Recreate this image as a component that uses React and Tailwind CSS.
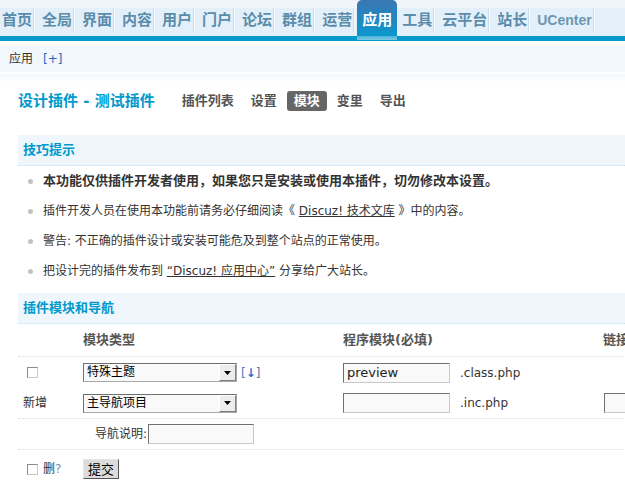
import React from "react";

const tabs = ["首页", "全局", "界面", "内容", "用户", "门户", "论坛", "群组", "运营", "应用", "工具", "云平台", "站长", "UCenter"];
const subNav = ["插件列表", "设置", "模块", "变里", "导出"];

const inputClass =
  "h-[20px] border border-t-[#707070] border-l-[#707070] border-r-[#c8c8c8] border-b-[#c8c8c8] bg-[#f9f9f9] pl-[3px] text-[13px] text-[#222] outline-none";

const FakeSelect = ({ value }) => (
  <div className="flex h-[19px] w-[154px] border border-t-[#707070] border-l-[#707070] border-r-[#a8a8a8] border-b-[#a8a8a8] bg-[#f9f9f9]">
    <span className="flex-1 pl-[3px] text-[12px] leading-[17px] text-black">{value}</span>
    <span className="flex w-[17px] items-center justify-center border border-t-white border-l-white border-r-[#808080] border-b-[#808080] bg-[#ececec]">
      <svg width="7" height="4" viewBox="0 0 7 4">
        <path d="M0 0h7L3.5 4z" fill="#000" />
      </svg>
    </span>
  </div>
);

const Checkbox = () => (
  <span className="block h-[11px] w-[11px] border border-t-[#8a8a8a] border-l-[#8a8a8a] border-r-[#c8c8c8] border-b-[#c8c8c8] bg-white" />
);

const SectionHeader = ({ children, className }) => (
  <div
    className={
      "flex h-[31px] items-center border-b border-dotted border-[#c9dfee] bg-[#eff6fc] pl-[5px] text-[13px] font-bold text-[#0099cc] " +
      className
    }
  >
    {children}
  </div>
);

const Tip = ({ children, bold }) => (
  <li className="flex h-[30px] items-center">
    <span className="mx-[10px] h-[5px] w-[5px] rounded-full bg-[#c2c2c2]" />
    <span className={bold ? "text-[13px] font-bold text-[#333]" : "text-[12px] text-[#333]"}>{children}</span>
  </li>
);

export default function App() {
  return (
    <div className="w-full overflow-hidden bg-white text-[12px] text-[#333] [font-family:'DejaVu_Sans','Noto_Sans_CJK_SC',sans-serif]">
      {/* top nav */}
      <div className="flex h-[36px] items-start bg-[linear-gradient(#eef6fc_8px,#e4f0f9_8px)]">
        <div className="-ml-[3px] flex items-start">
          {tabs.map((t) =>
            t === "应用" ? (
              <a
                key={t}
                className="relative z-10 flex h-[40px] w-[40px] items-center justify-center rounded-t-[5px] bg-[linear-gradient(#3a76b2,#0b98cd_36px,#4cb3dc_36px,#7cc8e6)] text-[15px] font-bold leading-none text-white"
              >
                {t}
              </a>
            ) : (
              <a key={t} className="flex h-[36px] items-center pl-[5px] pt-[4px]">
                <span
                  className={
                    t === "UCenter"
                      ? "text-[14px] font-bold leading-none text-[#6b97b3] [font-family:'Liberation_Sans',sans-serif]"
                      : "text-[15px] font-bold leading-none text-[#5a8cab]"
                  }
                >
                  {t}
                </span>
                <span className="ml-[1px] mr-[2px] flex h-[22px]">
                  <span className="w-px bg-[#c7dbe9]" />
                  <span className="w-px bg-[#f7fbfd]" />
                </span>
              </a>
            )
          )}
        </div>
      </div>
      <div className="h-[5px] bg-[#069acc]" />

      {/* secondary bar */}
      <div className="mt-[5px] flex h-[26px] items-center bg-[#f1f7fc] pl-[9px]">
        <span className="text-[12px] text-[#333]">应用</span>
        <span className="ml-[10px] text-[12px] text-[#2466bd]">[+]</span>
      </div>
      <div className="mt-[2px] h-[8px] bg-gradient-to-b from-[#f2f8fc] to-white" />

      <div className="pl-[18px]">
        {/* title row */}
        <div className="mt-[9px] flex h-[20px] items-center">
          <h3 className="mr-[20px] text-[15px] font-bold leading-none text-[#0099cc]">设计插件 - 测试插件</h3>
          <div className="flex gap-[3px]">
            {subNav.map((s) => (
              <a
                key={s}
                className={
                  s === "模块"
                    ? "flex h-[20px] items-center rounded-[3px] bg-[#666] px-[7px] text-[13px] font-bold text-white"
                    : "flex h-[20px] items-center px-[7px] text-[13px] font-bold text-[#555]"
                }
              >
                {s}
              </a>
            ))}
          </div>
        </div>

        <SectionHeader className="mt-[24px]">技巧提示</SectionHeader>
        <ul>
          <Tip bold>本功能仅供插件开发者使用，如果您只是安装或使用本插件，切勿修改本设置。</Tip>
          <Tip>
            插件开发人员在使用本功能前请务必仔细阅读《 <a className="underline">Discuz! 技术文库</a> 》中的内容。
          </Tip>
          <Tip>警告: 不正确的插件设计或安装可能危及到整个站点的正常使用。</Tip>
          <Tip>
            把设计完的插件发布到 <a className="underline">“Discuz! 应用中心”</a> 分享给广大站长。
          </Tip>
        </ul>

        <SectionHeader className="mt-[7px]">插件模块和导航</SectionHeader>

        <div className="w-[800px]">
          <div className="grid h-[33px] grid-cols-[65px_260px_260px_215px] items-center border-b border-dotted border-[#c9dfee] text-[13px] font-bold text-[#555]">
            <span />
            <span>模块类型</span>
            <span>程序模块(必填)</span>
            <span>链接</span>
          </div>

          <div className="grid h-[31px] grid-cols-[65px_260px_260px_215px] items-center">
            <span className="pl-[9px]">
              <Checkbox />
            </span>
            <span className="flex items-center">
              <FakeSelect value="特殊主题" />
              <span className="ml-[4px] text-[12px] text-[#4a78b0]">
                [<span className="font-bold text-[#1f6fc5]">↓</span>]
              </span>
            </span>
            <span className="flex items-center">
              <input readOnly value="preview" className={inputClass + " w-[107px]"} />
              <span className="ml-[10px] text-[12px] text-[#333]">.class.php</span>
            </span>
            <span />
          </div>

          <div className="grid h-[31px] grid-cols-[65px_260px_260px_215px] items-center border-b border-dotted border-[#c9dfee]">
            <span className="pl-[5px] text-[12px]">新增</span>
            <span className="flex items-center">
              <FakeSelect value="主导航项目" />
            </span>
            <span className="flex items-center">
              <input readOnly value="" className={inputClass + " w-[107px]"} />
              <span className="ml-[10px] text-[12px] text-[#333]">.inc.php</span>
            </span>
            <span className="pl-[1px]">
              <input readOnly value="" className={inputClass + " w-[107px]"} />
            </span>
          </div>

          <div className="grid h-[31px] grid-cols-[65px_260px_260px_215px] items-center border-b border-dotted border-[#c9dfee]">
            <span />
            <span className="flex items-center pl-[12px]">
              <span className="text-[12px] text-[#333]">导航说明:</span>
              <input readOnly value="" className={inputClass + " ml-[1px] w-[106px]"} />
            </span>
            <span />
            <span />
          </div>

          <div className="grid h-[38px] grid-cols-[65px_260px_260px_215px] items-center">
            <span className="flex items-center pl-[9px]">
              <Checkbox />
              <span className="ml-[5px] text-[12px] text-[#333]">
                删<span className="text-[#7a8fa3]">?</span>
              </span>
            </span>
            <span>
              <button className="h-[20px] w-[36px] border border-t-[#e6e6e6] border-l-[#e6e6e6] border-r-[#555] border-b-[#555] bg-[#dcdcdc] text-[13px] leading-none text-black">
                提交
              </button>
            </span>
            <span />
            <span />
          </div>
        </div>
      </div>
    </div>
  );
}
